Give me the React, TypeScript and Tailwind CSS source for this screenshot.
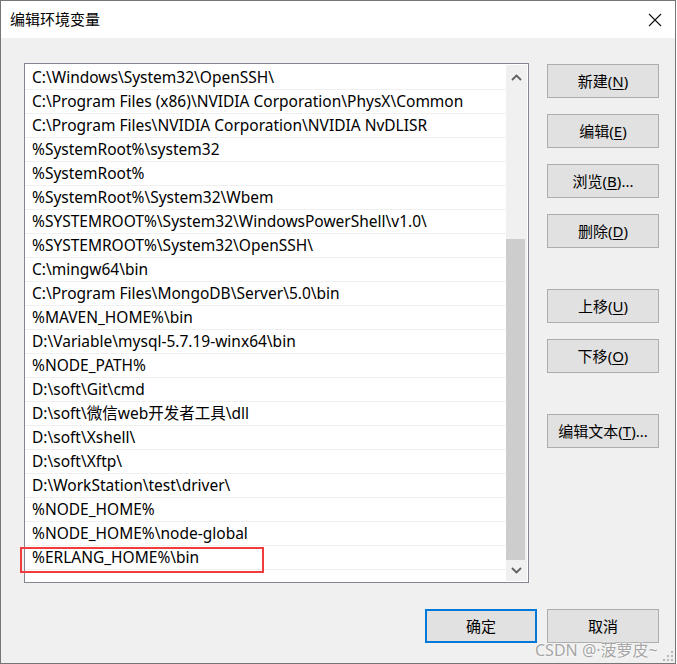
import React from 'react';

const FONT = '"Noto Sans", "Noto Sans CJK SC", sans-serif';

const paths = [
  'C:\\Windows\\System32\\OpenSSH\\',
  'C:\\Program Files (x86)\\NVIDIA Corporation\\PhysX\\Common',
  'C:\\Program Files\\NVIDIA Corporation\\NVIDIA NvDLISR',
  '%SystemRoot%\\system32',
  '%SystemRoot%',
  '%SystemRoot%\\System32\\Wbem',
  '%SYSTEMROOT%\\System32\\WindowsPowerShell\\v1.0\\',
  '%SYSTEMROOT%\\System32\\OpenSSH\\',
  'C:\\mingw64\\bin',
  'C:\\Program Files\\MongoDB\\Server\\5.0\\bin',
  '%MAVEN_HOME%\\bin',
  'D:\\Variable\\mysql-5.7.19-winx64\\bin',
  '%NODE_PATH%',
  'D:\\soft\\Git\\cmd',
  'D:\\soft\\微信web开发者工具\\dll',
  'D:\\soft\\Xshell\\',
  'D:\\soft\\Xftp\\',
  'D:\\WorkStation\\test\\driver\\',
  '%NODE_HOME%',
  '%NODE_HOME%\\node-global',
  '%ERLANG_HOME%\\bin',
];

interface BtnProps {
  label: string;
  mn: string;
  suffix?: string;
  primary?: boolean;
}

function Btn({ label, mn, suffix, primary }: BtnProps) {
  return (
    <button
      className={`w-[112px] h-[34px] bg-[#e1e1e1] flex items-center justify-center text-[15px] text-black ${
        primary ? 'border-2 border-[#0078d7]' : 'border border-[#adadad]'
      }`}
    >
      {label}
      {mn && (
        <>
          (<span className="underline underline-offset-2">{mn}</span>)
        </>
      )}
      {suffix}
    </button>
  );
}

function Chevron({ up }: { up?: boolean }) {
  return (
    <svg width="11" height="7" viewBox="0 0 11 7">
      <path
        d={up ? 'M1 6 L5.5 1.5 L10 6' : 'M1 1 L5.5 5.5 L10 1'}
        fill="none"
        stroke="#606060"
        strokeWidth="1.8"
      />
    </svg>
  );
}

export default function App() {
  return (
    <div className="w-[677px] h-[664px] bg-white" style={{ fontFamily: FONT }}>
      <div className="relative w-[676px] h-[664px] border border-[#767676] flex flex-col">
        {/* title bar */}
        <div className="h-[37px] bg-white flex items-center justify-between pl-[9px] pr-[13px] shrink-0">
          <span className="text-[15px] text-black">编辑环境变量</span>
          <svg width="14" height="14" viewBox="0 0 14 14">
            <path d="M1 1 L13 13 M13 1 L1 13" stroke="#111" strokeWidth="1.1" />
          </svg>
        </div>

        {/* body */}
        <div className="flex-1 bg-[#f0f0f0] pl-[23px] pr-[16px] pt-[25px] flex flex-col">
          <div className="flex gap-[18px]">
            <div className="relative w-[505px] h-[520px] border border-[#828790] bg-white flex pt-[1px] pb-[1px] pr-[1px]">
              <div className="flex-1 pt-[1px]">
                {paths.map((p) => (
                  <div
                    key={p}
                    className="h-[24px] border-b border-[#f0f0f0] flex items-center pl-[7px] text-[15.5px] text-black whitespace-nowrap"
                  >
                    {p}
                  </div>
                ))}
              </div>
              <div className="w-[21px] bg-[#f0f0f0] flex flex-col">
                <div className="h-[24px] flex items-center justify-center">
                  <Chevron up />
                </div>
                <div className="flex-1 flex flex-col">
                  <div className="h-[150px]" />
                  <div className="flex-1 bg-[#cdcdcd] mr-[2px]" />
                </div>
                <div className="h-[21px] flex items-center justify-center">
                  <Chevron />
                </div>
              </div>
            </div>

            <div className="flex flex-col pt-[1px]">
              <div className="flex flex-col gap-[16px]">
                <Btn label="新建" mn="N" />
                <Btn label="编辑" mn="E" />
                <Btn label="浏览" mn="B" suffix="..." />
                <Btn label="删除" mn="D" />
              </div>
              <div className="flex flex-col gap-[16px] mt-[41px]">
                <Btn label="上移" mn="U" />
                <Btn label="下移" mn="O" />
              </div>
              <div className="mt-[41px]">
                <Btn label="编辑文本" mn="T" suffix="..." />
              </div>
            </div>
          </div>

          <div className="flex justify-end gap-[10px] mt-[26px]">
            <Btn label="确定" mn="" primary />
            <Btn label="取消" mn="" />
          </div>
        </div>

        {/* red highlight over the last entry */}
        <div className="absolute left-[19px] top-[546px] w-[244px] h-[26px] border-2 border-[#f03c3c]" />

        {/* watermark */}
        <div
          className="absolute left-[534px] top-[637px] text-[16px] text-[#a6a6a6] whitespace-nowrap"
          style={{ textShadow: '0 0 2px #fff, 0 0 2px #fff' }}
        >
          CSDN @·菠萝皮~
        </div>

        {/* resize grip */}
        <svg className="absolute right-[2px] bottom-[2px]" width="10" height="10" viewBox="0 0 10 10">
          <rect x="8" y="0" width="2" height="2" fill="#b8b8b8" />
          <rect x="4" y="4" width="2" height="2" fill="#b8b8b8" />
          <rect x="8" y="4" width="2" height="2" fill="#b8b8b8" />
          <rect x="0" y="8" width="2" height="2" fill="#b8b8b8" />
          <rect x="4" y="8" width="2" height="2" fill="#b8b8b8" />
          <rect x="8" y="8" width="2" height="2" fill="#b8b8b8" />
        </svg>
      </div>
    </div>
  );
}
